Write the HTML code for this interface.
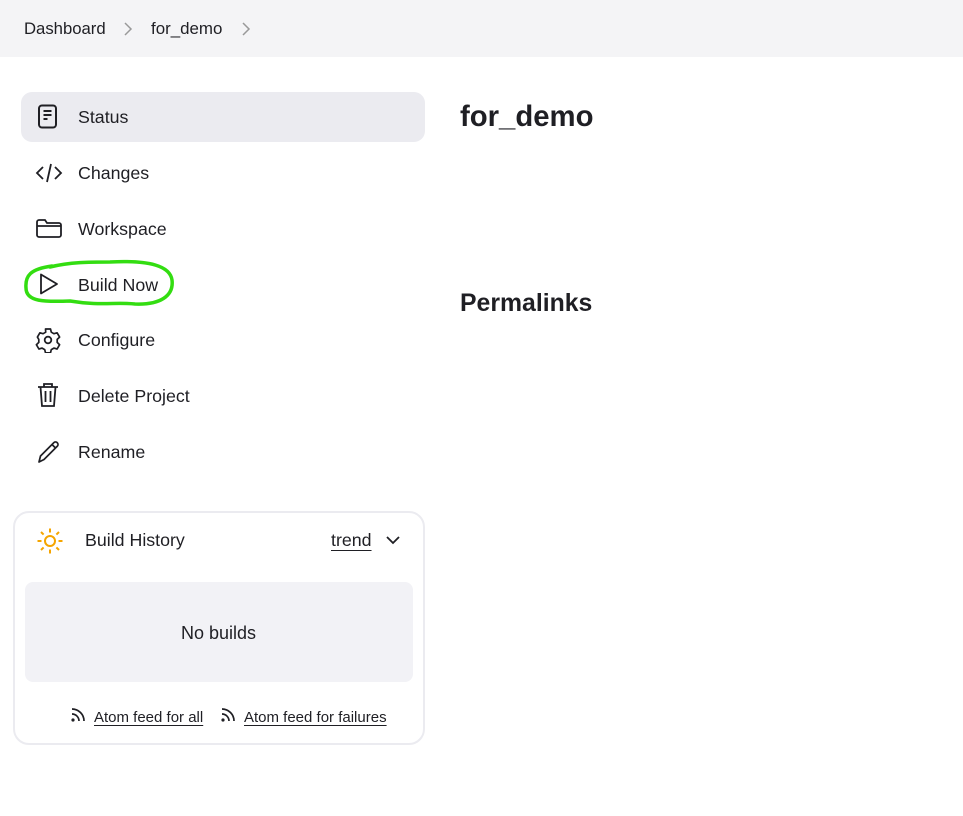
<!DOCTYPE html>
<html><head><style>
body{margin:0;width:963px;height:816px;background:#fff;font-family:"Liberation Sans",sans-serif;color:#1f1f24;position:relative;overflow:hidden}
.hdr{position:absolute;left:0;top:0;width:963px;height:57px;background:#f4f4f6}
.t{position:absolute;white-space:nowrap}
.item{position:absolute;left:78px;font-size:17.8px;line-height:20px}
svg.i{position:absolute}
a{color:#1f1f24}
</style></head><body>
<div class="hdr"></div>
<div class="t" style="left:24px;top:19px;font-size:16.7px">Dashboard</div>
<svg class="i" style="left:122px;top:21px" width="12" height="16" viewBox="0 0 12 16"><path d="M3 2l6 6-6 6" fill="none" stroke="#999" stroke-width="1.5"/></svg>
<div class="t" style="left:151px;top:19px;font-size:16.9px">for_demo</div>
<svg class="i" style="left:240px;top:21px" width="12" height="16" viewBox="0 0 12 16"><path d="M3 2l6 6-6 6" fill="none" stroke="#999" stroke-width="1.5"/></svg>

<div style="position:absolute;left:21px;top:92px;width:404px;height:50px;background:#ebebf0;border-radius:11px"></div>

<svg class="i" style="left:36px;top:104px" width="24" height="26" viewBox="0 0 24 26"><rect x="3" y="1.5" width="17" height="22" rx="3" fill="none" stroke="#1f1f24" stroke-width="2"/><path d="M7.5 7h8M7.5 11h8M7.5 15h4" stroke="#1f1f24" stroke-width="2"/></svg>
<div class="item" style="top:107px">Status</div>

<svg class="i" style="left:35px;top:162px" width="28" height="22" viewBox="0 0 28 22"><path d="M8 5L2 11l6 6M20 5l6 6-6 6M16 2l-4 18" fill="none" stroke="#1f1f24" stroke-width="1.8"/></svg>
<div class="item" style="top:163px">Changes</div>

<svg class="i" style="left:35px;top:217px" width="28" height="22" viewBox="0 0 28 22"><path d="M2 5a2 2 0 0 1 2-2h6l2 3h12a2 2 0 0 1 2 2v10a2 2 0 0 1-2 2H4a2 2 0 0 1-2-2zM2 9h24" fill="none" stroke="#1f1f24" stroke-width="1.8"/></svg>
<div class="item" style="top:219px">Workspace</div>

<svg class="i" style="left:38px;top:272px" width="22" height="24" viewBox="0 0 22 24"><path d="M3 2.5v19l16-9.5z" fill="none" stroke="#1f1f24" stroke-width="1.8" stroke-linejoin="round"/></svg>
<div class="item" style="top:275px">Build Now</div>
<svg class="i" style="left:20px;top:256px" width="160" height="56" viewBox="0 0 160 56"><path d="M30 11C50 6 70 6 90 6 130 4 150 10 152 24 154 40 140 49 115 48 95 46 80 50 50 45 25 46 6 46 6 32 5 20 10 13 32 10" fill="none" stroke="#33dd11" stroke-width="3.5" stroke-linecap="round"/></svg>

<svg class="i" style="left:35px;top:327px" width="26" height="26" viewBox="0 0 26 26"><path d="M10.5 2h5l.8 3.2 2.6 1.5 3.2-.9 2.5 4.3-2.4 2.3v3l2.4 2.3-2.5 4.3-3.2-.9-2.6 1.5-.8 3.2h-5l-.8-3.2-2.6-1.5-3.2.9-2.5-4.3 2.4-2.3v-3L2.4 10.1l2.5-4.3 3.2.9 2.6-1.5z" fill="none" stroke="#1f1f24" stroke-width="1.7" stroke-linejoin="round"/><circle cx="13" cy="13" r="3.3" fill="none" stroke="#1f1f24" stroke-width="1.8"/></svg>
<div class="item" style="top:330px">Configure</div>

<svg class="i" style="left:36px;top:382px" width="24" height="26" viewBox="0 0 24 26"><path d="M2 5h20M8 5V2h8v3M4.5 5l1.5 19h12l1.5-19M9.5 9v11M14.5 9v11" fill="none" stroke="#1f1f24" stroke-width="1.8"/></svg>
<div class="item" style="top:386px">Delete Project</div>

<svg class="i" style="left:36px;top:438px" width="26" height="26" viewBox="0 0 26 26"><path d="M3 24l1.5-6L18 4.5a2.5 2.5 0 0 1 3.5 3.5L8 21.5z M16 6.5l3.5 3.5" fill="none" stroke="#1f1f24" stroke-width="1.7" stroke-linejoin="round"/></svg>
<div class="item" style="top:442px">Rename</div>

<div class="t" style="left:460px;top:100px;font-size:29.3px;font-weight:bold">for_demo</div>
<div class="t" style="left:460px;top:290px;font-size:24.8px;font-weight:bold">Permalinks</div>

<div style="position:absolute;left:13px;top:511px;width:408px;height:230px;border:2px solid #ebebf0;border-radius:16px"></div>
<svg class="i" style="left:36px;top:527px" width="28" height="28" viewBox="0 0 28 28"><circle cx="14" cy="14" r="5" fill="none" stroke="#f5a500" stroke-width="2"/><g stroke="#f5a500" stroke-width="2"><path d="M14 1.5v4M14 22.5v4M1.5 14h4M22.5 14h4M5 5l2.6 2.6M20.4 20.4L23 23M5 23l2.6-2.6M20.4 7.6L23 5"/></g></svg>
<div class="t" style="left:85px;top:530px;font-size:17.8px">Build History</div>
<div class="t" style="left:331px;top:530px;font-size:17.8px;text-decoration:underline;text-underline-offset:4px">trend</div>
<svg class="i" style="left:385px;top:533px" width="16" height="14" viewBox="0 0 16 14"><path d="M2 4l6 6 6-6" fill="none" stroke="#1f1f24" stroke-width="1.8"/></svg>
<div style="position:absolute;left:25px;top:582px;width:388px;height:100px;background:#f2f2f6;border-radius:8px"></div>
<div class="t" style="left:181px;top:623px;font-size:18px">No builds</div>
<svg class="i" style="left:70px;top:706px" width="18" height="18" viewBox="0 0 18 18"><circle cx="3" cy="14" r="1.6" fill="#1f1f24"/><path d="M2 8a7 7 0 0 1 7 7M2 3a12 12 0 0 1 12 12" fill="none" stroke="#1f1f24" stroke-width="1.7"/></svg>
<div class="t" style="left:94px;top:709px;font-size:15px;text-decoration:underline;text-underline-offset:3px">Atom feed for all</div>
<svg class="i" style="left:220px;top:706px" width="18" height="18" viewBox="0 0 18 18"><circle cx="3" cy="14" r="1.6" fill="#1f1f24"/><path d="M2 8a7 7 0 0 1 7 7M2 3a12 12 0 0 1 12 12" fill="none" stroke="#1f1f24" stroke-width="1.7"/></svg>
<div class="t" style="left:244px;top:709px;font-size:15px;text-decoration:underline;text-underline-offset:3px">Atom feed for failures</div>
</body></html>
